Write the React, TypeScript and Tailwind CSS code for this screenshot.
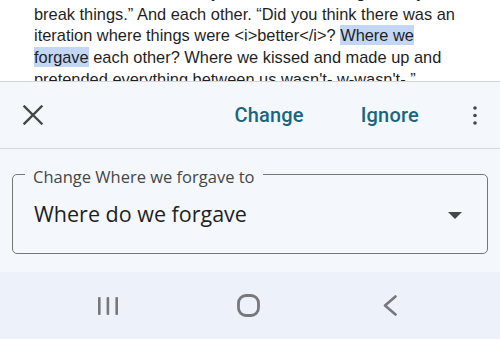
import React from 'react';

const bodyFont = { fontFamily: '"Liberation Sans", Arial, sans-serif' };
const uiFont = { fontFamily: '"Open Sans", Roboto, sans-serif' };
const buttonFont = { fontFamily: 'Roboto, "Open Sans", sans-serif' };

function CloseIcon() {
  return (
    <svg width="20" height="20" viewBox="0 0 20 20" fill="none">
      <path d="M1.5 1.5L18.5 18.5M18.5 1.5L1.5 18.5" stroke="#444746" strokeWidth="2.4" strokeLinecap="square" />
    </svg>
  );
}

function MoreIcon() {
  return (
    <svg width="4" height="19" viewBox="0 0 4 19" fill="#444746">
      <circle cx="2" cy="2" r="1.8" />
      <circle cx="2" cy="9.5" r="1.8" />
      <circle cx="2" cy="17" r="1.8" />
    </svg>
  );
}

function NavBar() {
  return (
    <nav className="flex h-[67px] items-center bg-[#edf2fa] pl-[98px]">
      <svg width="21" height="18" viewBox="0 0 21 18" fill="#76787c">
        <rect x="0" y="0" width="2.6" height="18" rx="1" />
        <rect x="8.6" y="0" width="2.6" height="18" rx="1" />
        <rect x="17.4" y="0" width="2.6" height="18" rx="1" />
      </svg>
      <svg className="ml-[118px]" width="23" height="23" viewBox="0 0 23 23" fill="none">
        <rect x="1.5" y="1.5" width="20" height="20" rx="7.5" stroke="#76787c" strokeWidth="2.8" />
      </svg>
      <svg className="ml-[123px]" width="14" height="21" viewBox="0 0 14 21" fill="none">
        <path d="M12.5 1.5L2 10.5L12.5 19.5" stroke="#76787c" strokeWidth="2.6" strokeLinecap="round" strokeLinejoin="round" />
      </svg>
    </nav>
  );
}

export default function App() {
  return (
    <div className="flex h-[339px] w-[500px] flex-col overflow-hidden bg-white">
      <div className="h-[81px] overflow-hidden bg-white">
        <div
          className="mt-[-18px] px-[34px] text-[16.4px] leading-[21.7px] text-[#1f1f1f] whitespace-nowrap"
          style={bodyFont}
        >
          <div>“It’s all too hard now, they said we had to let go. And you</div>
          <div>break things.” And each other. “Did you think there was an</div>
          <div>
            iteration where things were &lt;i&gt;better&lt;/i&gt;?{' '}
            <span className="bg-[#c3d7f5] py-[1px]">Where we</span>
          </div>
          <div>
            <span className="bg-[#c3d7f5] py-[1px]">forgave</span> each other? Where we kissed and made up and
          </div>
          <div>pretended everything between us wasn't- w-wasn't-.”</div>
        </div>
      </div>

      <section className="flex flex-1 flex-col border-t border-[#d3d6da] bg-[#f4f8fc]" style={uiFont}>
        <div className="flex h-[67px] items-center border-b border-[#d5d8dc] pl-[23px] pr-[23px]">
          <CloseIcon />
          <button
            type="button"
            className="ml-auto text-[20px] font-medium tracking-[0.2px] text-[#1a6580]"
            style={buttonFont}
          >
            Change
          </button>
          <button
            type="button"
            className="ml-[57px] text-[20px] font-medium tracking-[0.2px] text-[#1a6580]"
            style={buttonFont}
          >
            Ignore
          </button>
          <span className="ml-[54px] flex">
            <MoreIcon />
          </span>
        </div>

        <div className="px-[12px] pt-[25px]">
          <div className="relative flex h-[80px] items-center rounded-[5px] border border-[#747775] pl-[21px] pr-[25px]">
            <span className="absolute left-[12px] top-[-6px] bg-[#f4f8fc] px-[8px] text-[16.5px] leading-[16px] text-[#444746]">
              Change Where we forgave to
            </span>
            <span className="text-[21.5px] text-[#1f1f1f]">Where do we forgave</span>
            <svg className="ml-auto mt-[2px]" width="14" height="7" viewBox="0 0 14 7" fill="#444746">
              <path d="M0 0H14L7 7Z" />
            </svg>
          </div>
        </div>

        <div className="flex-1" />
        <NavBar />
      </section>
    </div>
  );
}
